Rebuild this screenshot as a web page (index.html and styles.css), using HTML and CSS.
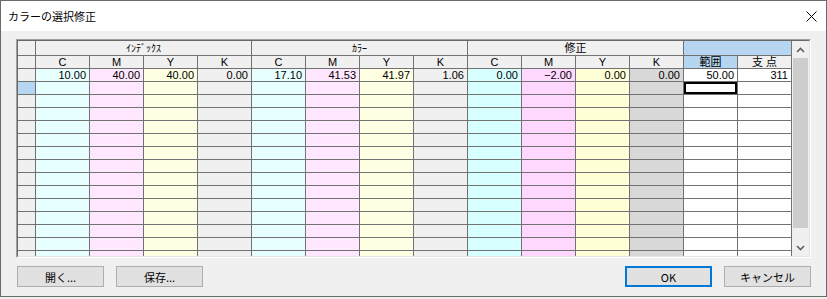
FILE: index.html
```html
<!DOCTYPE html>
<html lang="ja">
<head>
    <meta charset="UTF-8">
    <title>カラーの選択修正</title>
<link rel="stylesheet" href="styles.css">
</head>
<body>
<div class="window">
    <div class="titlebar">
        <span class="title">カラーの選択修正</span>
        <svg class="close" width="11" height="11" viewBox="0 0 11 11">
            <path d="M0.5 0.5L10.5 10.5M10.5 0.5L0.5 10.5" stroke="#000" stroke-width="1" fill="none"/>
        </svg>
    </div>
    <div class="client">
        <div class="frame">
            <div class="frame-inner">
                <div class="grid-view">
                    <div class="grid" id="grid">
                        <div class="hd"></div>
                        <div class="hd span4 kana">ｲﾝﾃﾞｯｸｽ</div>
                        <div class="hd span4 kana">ｶﾗｰ</div>
                        <div class="hd span4">修正</div>
                        <div class="hd span2 sel"></div>

                        <div class="hd"></div>
                        <div class="hd">C</div><div class="hd">M</div><div class="hd">Y</div><div class="hd">K</div>
                        <div class="hd">C</div><div class="hd">M</div><div class="hd">Y</div><div class="hd">K</div>
                        <div class="hd">C</div><div class="hd">M</div><div class="hd">Y</div><div class="hd">K</div>
                        <div class="hd sel">範囲</div><div class="hd">支 点</div>
                    </div>
                </div>
                <div class="vscroll">
                    <div class="arrow">
                        <svg width="9" height="6" viewBox="0 0 9 6"><path d="M1 5L4.5 1.5L8 5" stroke="#606060" stroke-width="1.6" fill="none"/></svg>
                    </div>
                    <div class="track"><div class="thumb"></div></div>
                    <div class="arrow">
                        <svg width="9" height="6" viewBox="0 0 9 6"><path d="M1 1L4.5 4.5L8 1" stroke="#606060" stroke-width="1.6" fill="none"/></svg>
                    </div>
                </div>
            </div>
        </div>
        <div class="buttons">
            <button class="btn first">開く...</button>
            <button class="btn">保存...</button>
            <span class="spacer"></span>
            <button class="btn default">OK</button>
            <button class="btn">キャンセル</button>
        </div>
    </div>
</div>
<script>
    document.addEventListener('DOMContentLoaded', () => {
        const grid = document.getElementById('grid');
        const colors = ['c', 'm', 'y', 'k', 'c', 'm', 'y', 'k', 'c2', 'm2', 'y2', 'k2', 'w', 'w'];
        const first = ['10.00', '40.00', '40.00', '0.00', '17.10', '41.53', '41.97', '1.06',
                       '0.00', '−2.00', '0.00', '0.00', '50.00', '311'];

        for (let r = 0; r < 15; r++) {
            const head = document.createElement('div');
            head.className = r === 1 ? 'rh sel' : 'rh';
            grid.appendChild(head);
            colors.forEach((color, i) => {
                const cell = document.createElement('div');
                cell.className = 'cell ' + color;
                if (r === 0) cell.textContent = first[i];
                if (r === 1 && i === 12) cell.classList.add('focus');
                grid.appendChild(cell);
            });
        }
    });
</script>
</body>
</html>
```

FILE: styles.css
```css
body {
    margin: 0;
    background: #f0f0f0;
    font-family: "Noto Sans CJK JP", "Liberation Sans", sans-serif;
}
.window {
    width: 827px;
    height: 297px;
    box-sizing: border-box;
    border: 1px solid #6a6a6a;
    background: #f0f0f0;
}
.titlebar {
    height: 30px;
    background: #fff;
    display: flex;
    align-items: center;
    padding-left: 7px;
    padding-right: 9px;
}
.title {
    font-size: 11px;
    color: #000;
    flex: 1;
}
.close {
    display: block;
}
.client {
    padding: 8px 0 0 15px;
}
.frame {
    width: 795px;
    box-sizing: border-box;
    border: 1px solid #a0a0a0;
    border-right-color: #fff;
    border-bottom-color: #fff;
}
.frame-inner {
    display: flex;
    border: 1px solid #696969;
    border-right-color: #e3e3e3;
    border-bottom-color: #e3e3e3;
}
.grid-view {
    width: 774px;
    height: 215px;
    overflow: hidden;
}
.grid {
    display: grid;
    grid-template-columns: 17px repeat(14, 53px);
    grid-template-rows: 14px;
    grid-auto-rows: 12px;
    gap: 1px;
    padding-right: 1px;
    background: #727272;
    font-family: "Liberation Sans", "Noto Sans CJK JP", sans-serif;
    font-size: 11px;
    line-height: 12px;
    color: #000;
}
.hd {
    background: #f0f0f0;
    text-align: center;
}
.grid > .hd:nth-child(-n+5) {
    line-height: 14px;
}
.span4 {
    grid-column: span 4;
}
.span2 {
    grid-column: span 2;
}
.kana {
    font-family: "Noto Sans CJK JP", sans-serif;
    font-size: 10px;
}
.rh {
    background: #f0f0f0;
}
.sel {
    background: #b5d5f1;
}
.cell {
    text-align: right;
    padding-right: 3px;
    white-space: nowrap;
}
.c { background: #e8ffff; }
.m { background: #ffe8ff; }
.y { background: #ffffe4; }
.k { background: #f0f0f0; }
.c2 { background: #d8ffff; }
.m2 { background: #ffd8ff; }
.y2 { background: #ffffd8; }
.k2 { background: #d8d8d8; }
.w { background: #fff; }
.focus {
    box-shadow: inset 0 0 0 2px #000;
}
.vscroll {
    width: 17px;
    height: 215px;
    display: flex;
    flex-direction: column;
    background: #f0f0f0;
}
.arrow {
    height: 17px;
    display: flex;
    align-items: center;
    justify-content: center;
}
.arrow svg {
    display: block;
}
.track {
    flex: 1;
    padding: 0 1px;
}
.thumb {
    height: 170px;
    background: #cdcdcd;
}
.buttons {
    display: flex;
    width: 795px;
    margin-top: 8px;
    gap: 12px;
}
.spacer {
    flex: 1;
}
.btn {
    width: 87px;
    height: 21px;
    box-sizing: border-box;
    border: 1px solid #adadad;
    background: #e1e1e1;
    font-family: "Noto Sans CJK JP", "Liberation Sans", sans-serif;
    font-size: 11px;
    color: #000;
    padding: 0;
}
.btn.first {
    margin-left: 1px;
}
.btn.default {
    border: 2px solid #0078d7;
}
```
